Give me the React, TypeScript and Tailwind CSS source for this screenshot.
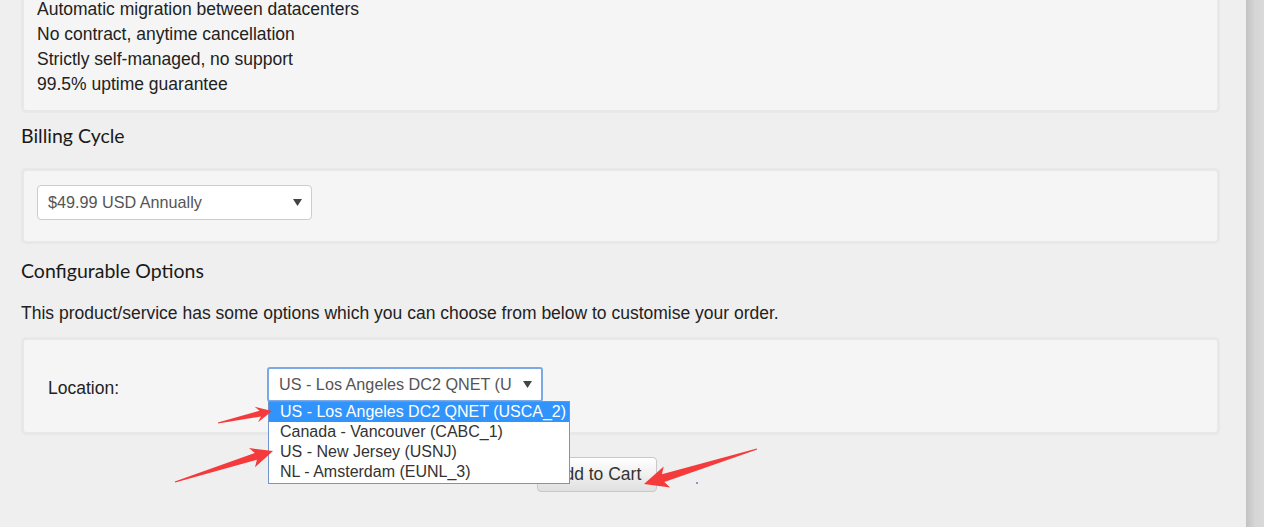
import React from "react";

type Pt = [number, number];

function arrowPoints(t: Pt, p: Pt, headLen: number, headHalf: number, neckHalf: number, tailHalf: number): string {
  const dx = p[0] - t[0];
  const dy = p[1] - t[1];
  const L = Math.hypot(dx, dy);
  const ux = dx / L;
  const uy = dy / L;
  const nx = -uy;
  const ny = ux;
  const bx = p[0] - ux * headLen;
  const by = p[1] - uy * headLen;
  const kx = bx + ux * 4;
  const ky = by + uy * 4;
  const pts: Pt[] = [
    [t[0] + nx * tailHalf, t[1] + ny * tailHalf],
    [kx + nx * neckHalf, ky + ny * neckHalf],
    [bx + nx * headHalf, by + ny * headHalf],
    p,
    [bx - nx * headHalf, by - ny * headHalf],
    [kx - nx * neckHalf, ky - ny * neckHalf],
    [t[0] - nx * tailHalf, t[1] - ny * tailHalf],
  ];
  return pts.map((q) => `${q[0].toFixed(1)},${q[1].toFixed(1)}`).join(" ");
}

function Caret() {
  return (
    <svg width="9" height="7" viewBox="0 0 9 7" className="shrink-0">
      <path d="M0 0 H9 L4.5 7 Z" fill="#444" />
    </svg>
  );
}

const body = { fontFamily: '"Liberation Sans", Arial, sans-serif' };
const head = { fontFamily: 'Lato, "Open Sans", sans-serif' };

export default function App() {
  return (
    <div className="relative flex h-[527px] w-[1264px] overflow-hidden bg-[#efefef] text-[#222]" style={body}>
      <div className="flex w-[1246px] flex-col pl-[21px] pr-[26px]">
        {/* Well 1 */}
        <div className="-mt-[18px] rounded-[5px] border-[3px] border-[#e8e8e8] bg-[#f5f5f5] pb-[13px] pl-[13px] pt-[12px] text-[17.5px] leading-[25px]">
          <div>Automatic migration between datacenters</div>
          <div>No contract, anytime cancellation</div>
          <div>Strictly self-managed, no support</div>
          <div>99.5% uptime guarantee</div>
        </div>

        <h2 className="mt-[10px] text-[19.5px] leading-[26px] text-[#1a1a1a]" style={head}>
          Billing Cycle
        </h2>

        {/* Well 2 */}
        <div className="mt-[19px] rounded-[5px] border-[3px] border-[#e8e8e8] bg-[#f5f5f5] pb-[21px] pl-[13px] pt-[14px]">
          <div className="flex h-[35px] w-[275px] items-center justify-between rounded-[4px] border border-[#cccccc] bg-white pl-[10px] pr-[9px] text-[16.2px] text-[#555]">
            <span>$49.99 USD Annually</span>
            <Caret />
          </div>
        </div>

        <h2 className="mt-[14px] text-[19.5px] leading-[26px] text-[#1a1a1a]" style={head}>
          Configurable Options
        </h2>

        <p className="mt-[17px] text-[17.5px] leading-[25px]">
          This product/service has some options which you can choose from below to customise your order.
        </p>

        {/* Well 3 */}
        <div className="mt-[11px] flex items-start rounded-[5px] border-[3px] border-[#e8e8e8] bg-[#f5f5f5] pb-[30px] pl-[24px] pt-[27px]">
          <div className="mt-[9px] w-[219px] text-[17.5px] leading-[25px]">Location:</div>
          <div className="relative">
            <div className="flex h-[35px] w-[276px] items-center justify-between rounded-[3px] border-2 border-[#7aa9e6] bg-white pl-[10px] pr-[9px] text-[16.2px] text-[#555]">
              <span className="w-[232px] overflow-hidden whitespace-nowrap">US - Los Angeles DC2 QNET (USCA_2)</span>
              <Caret />
            </div>
            <div className="absolute left-[1px] top-[34px] z-10 w-[302px] border border-[#7294cf] bg-white text-[16px] leading-[20px] text-[#333]">
              <div className="bg-[#3094fc] pl-[11px] text-white">US - Los Angeles DC2 QNET (USCA_2)</div>
              <div className="pl-[11px]">Canada - Vancouver (CABC_1)</div>
              <div className="pl-[11px]">US - New Jersey (USNJ)</div>
              <div className="pl-[11px] pb-[1px]">NL - Amsterdam (EUNL_3)</div>
            </div>
          </div>
        </div>

        <div className="ml-[516px] mt-[22px]">
          <button className="h-[35px] w-[120px] rounded-[4px] border border-[#c8c8c8] bg-gradient-to-b from-white to-[#e0e0e0] text-[17.5px] text-[#333]" style={body}>
            Add to Cart
          </button>
        </div>
      </div>

      {/* right strip */}
      <div className="h-full w-[18px] bg-gradient-to-r from-[#c2c2c2] via-[#d6d6d6] to-[#d9d9d9]" />

      {/* annotation arrows */}
      <svg className="pointer-events-none absolute left-0 top-0 z-20" width="1264" height="527">
        <polygon points={arrowPoints([218, 423], [272, 411], 16, 8, 3, 0.6)} fill="#f43a3a" />
        <polygon points={arrowPoints([175, 482], [273, 451], 22, 10, 3.5, 0.6)} fill="#f43a3a" />
        <polygon points={arrowPoints([757, 449], [644, 484], 24, 11, 4, 0.6)} fill="#f43a3a" />
        <rect x="696" y="482" width="2" height="2" fill="#8899bb" />
      </svg>
    </div>
  );
}
